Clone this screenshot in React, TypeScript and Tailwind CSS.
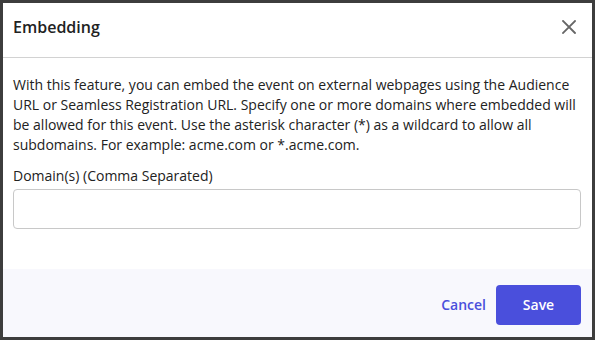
const CloseIcon = () => (
  <svg width="14" height="14" viewBox="0 0 14 14" fill="none" aria-hidden="true">
    <path d="M1 1L13 13M13 1L1 13" stroke="#666666" strokeWidth="1.8" strokeLinecap="square" />
  </svg>
);

const App = () => {
  return (
    <div
      className="flex flex-col w-[595px] h-[340px] border-[3px] border-[#3d3d3d] bg-white text-[#222222] overflow-hidden"
      style={{ fontFamily: '"Open Sans", "Noto Sans", sans-serif' }}
    >
      {/* header */}
      <div className="flex items-center justify-between h-[55px] pl-[10px] pr-[16px] pb-[7px] border-b border-[#d2d2d2] shrink-0">
        <h2 className="text-base leading-6 font-semibold">Embedding</h2>
        <button className="flex items-center justify-center w-[14px] h-[14px]">
          <CloseIcon />
        </button>
      </div>

      {/* body */}
      <div className="flex flex-col flex-1 pl-[10px] pr-[11px] pt-[17px]">
        <p className="text-sm leading-5">
          With this feature, you can embed the event on external webpages using the Audience URL or
          Seamless Registration URL. Specify one or more domains where embedded will be allowed for
          this event. Use the asterisk character (*) as a wildcard to allow all subdomains. For
          example: acme.com or *.acme.com.
        </p>
        <label className="mt-[11px] text-sm leading-5">Domain(s) (Comma Separated)</label>
        <input
          type="text"
          className="mt-[3px] h-10 w-full rounded-[4px] border border-[#c8c8c8] px-3 text-sm outline-none"
        />
      </div>

      {/* footer */}
      <div className="flex items-center justify-end h-[68px] shrink-0 bg-[#f8f8fd] pr-[11px] pt-[4px]">
        <button className="h-10 px-[10px] text-sm font-semibold text-[#4a4fdc]">Cancel</button>
        <button className="h-10 w-[85px] rounded-[4px] bg-[#4a4fdc] text-sm font-semibold text-white">
          Save
        </button>
      </div>
    </div>
  );
};

export default App;
